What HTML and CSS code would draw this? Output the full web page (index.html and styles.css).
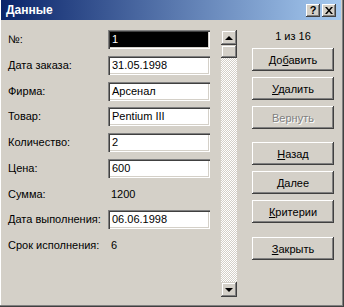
FILE: index.html
```html
<!DOCTYPE html>
<html lang="ru">

<head>
    <meta charset="UTF-8">
    <title>Данные</title>
    <link rel="stylesheet" href="styles.css">
</head>

<body>
    <div class="window">
        <div class="titlebar">
            <span class="title">Данные</span>
            <div class="caption-buttons">
                <span class="caption-btn help">?</span>
                <span class="caption-btn close">
                    <svg width="8" height="7" viewBox="0 0 8 7">
                        <path d="M0 0h2l2 2.5L6 0h2L5 3.5 8 7H6L4 4.5 2 7H0l3-3.5z" fill="#000"/>
                    </svg>
                </span>
            </div>
        </div>

        <div class="main">
            <div class="form">
                <label>№:</label>
                <div class="field selected">1</div>

                <label>Дата заказа:</label>
                <div class="field">31.05.1998</div>

                <label>Фирма:</label>
                <div class="field">Арсенал</div>

                <label>Товар:</label>
                <div class="field">Pentium III</div>

                <label>Количество:</label>
                <div class="field">2</div>

                <label>Цена:</label>
                <div class="field">600</div>

                <label>Сумма:</label>
                <div class="value">1200</div>

                <label>Дата выполнения:</label>
                <div class="field">06.06.1998</div>

                <label>Срок исполнения:</label>
                <div class="value">6</div>
            </div>

            <div class="scrollbar">
                <div class="arrow up"><span></span></div>
                <div class="thumb"></div>
                <div class="track"></div>
                <div class="arrow down"><span></span></div>
            </div>

            <div class="actions">
                <div class="record">1 из 16</div>
                <button>До<u>б</u>авить</button>
                <button><u>У</u>далить</button>
                <button disabled>Вернуть</button>
                <button class="group"><u>Н</u>азад</button>
                <button><u>Д</u>алее</button>
                <button><u>К</u>ритерии</button>
                <button class="group last"><u>З</u>акрыть</button>
            </div>
        </div>
    </div>
</body>

</html>
```

FILE: styles.css
```css
body {
    margin: 0;
    font-family: 'Liberation Sans', Arial, sans-serif;
    font-size: 11px;
    color: #000;
}

.window {
    width: 344px;
    height: 307px;
    box-sizing: border-box;
    padding: 0 3px 3px 1px;
    background-color: #d4d0c8;
    box-shadow: inset -1px -1px #404040, inset -2px -2px #808080, inset 1px 0 #fff;
}

/* title bar */
.titlebar {
    height: 20px;
    display: flex;
    align-items: center;
    justify-content: space-between;
    padding: 0 5px 0 5px;
    background: linear-gradient(to right, #0a246a, #a6caf0);
}

.title {
    color: white;
    font-weight: bold;
    font-size: 12px;
}

.caption-buttons {
    display: flex;
    gap: 2px;
}

.caption-btn {
    width: 14px;
    height: 13px;
    display: flex;
    align-items: center;
    justify-content: center;
    background-color: #d4d0c8;
    box-shadow: inset -1px -1px #404040, inset 1px 1px #fff, inset -2px -2px #808080;
}

.help {
    font-weight: bold;
    font-size: 11px;
    line-height: 13px;
}

/* main part */
.main {
    display: flex;
    padding: 10px 0 0 7px;
}

.form {
    display: grid;
    grid-template-columns: 100px 102px;
    grid-auto-rows: 25.75px;
}

.form label {
    line-height: 19px;
    white-space: nowrap;
}

.field {
    height: 19px;
    line-height: 19px;
    padding-left: 4px;
    background-color: #fff;
    box-shadow: inset 1px 1px #808080, inset 2px 2px #404040, inset -1px -1px #fff, inset -2px -2px #d4d0c8;
}

.field.selected {
    background-color: #000;
    color: #fff;
}

.value {
    line-height: 19px;
    padding-left: 3px;
}

/* scrollbar */
.scrollbar {
    width: 16px;
    height: 267px;
    margin-left: 11px;
    display: flex;
    flex-direction: column;
}

.arrow,
.thumb {
    height: 15px;
    flex-shrink: 0;
    background-color: #d4d0c8;
    box-shadow: inset -1px -1px #404040, inset 1px 1px #d4d0c8, inset -2px -2px #808080, inset 2px 2px #fff;
    display: flex;
    align-items: center;
    justify-content: center;
}

.thumb {
    height: 13px;
}

.arrow span {
    width: 0;
    height: 0;
    border-left: 4px solid transparent;
    border-right: 4px solid transparent;
}

.up span {
    border-bottom: 4px solid #000;
}

.down span {
    border-top: 4px solid #000;
}

.track {
    flex-grow: 1;
    background: repeating-conic-gradient(#fff 0 25%, #d4d0c8 0 50%) 0 0 / 2px 2px;
}

/* buttons */
.actions {
    width: 82px;
    margin-left: 15px;
    display: flex;
    flex-direction: column;
    gap: 6px;
}

.record {
    height: 12px;
    text-align: center;
    margin-bottom: 0;
    line-height: 12px;
}

.actions button {
    height: 23px;
    font-family: inherit;
    font-size: 11px;
    color: #000;
    background-color: #d4d0c8;
    border: none;
    padding: 0;
    box-shadow: inset -1px -1px #404040, inset 1px 1px #fff, inset -2px -2px #808080, inset 2px 2px #d4d0c8;
}

.actions button:disabled {
    color: #808080;
    text-shadow: 1px 1px #fff;
}

.actions button.group {
    margin-top: 7px;
}

.actions button.last {
    margin-top: 8px;
}
```
